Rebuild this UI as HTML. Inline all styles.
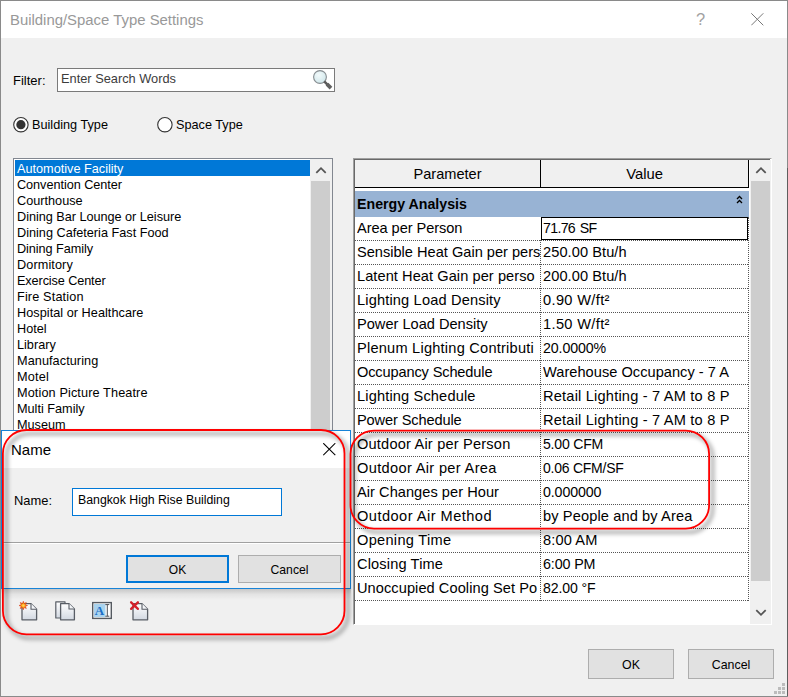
<!DOCTYPE html>
<html><head><meta charset="utf-8"><title>Building/Space Type Settings</title>
<style>
html,body{margin:0;padding:0;}
body{width:788px;height:697px;position:relative;overflow:hidden;background:#f0f0f0;font-family:"Liberation Sans",sans-serif;color:#000;}
.abs{position:absolute;}
.t{position:absolute;white-space:nowrap;line-height:16px;font-size:12px;}
#win{position:absolute;left:0;top:0;width:786px;height:695px;border:1px solid #8a8a8a;background:#f0f0f0;}
#titlebar{position:absolute;left:1px;top:1px;width:786px;height:37px;background:#fff;}
#title{left:10px;top:11px;font-size:14.9px;line-height:18px;color:#999;}
.li{position:absolute;left:17px;margin-top:1px;height:16px;line-height:16px;font-size:12.7px;white-space:nowrap;}
.btn{position:absolute;box-sizing:border-box;background:#e1e1e1;border:1px solid #adadad;text-align:center;font-size:12.4px;}
.row{position:absolute;left:355px;width:393px;height:24px;}
.p,.v{position:absolute;top:0;height:23px;line-height:23px;font-size:14.6px;white-space:nowrap;overflow:hidden;}
.p{left:2px;width:183px;}
.v{left:188px;width:204px;}
.hl{position:absolute;left:355px;width:393px;height:0;border-top:1px dotted #555;}
</style></head><body>
<div id="win"></div>
<div id="titlebar"></div>
<div class="abs" style="left:787px;top:168px;width:1px;height:528px;background:#5e5e5e;"></div>
<div class="t" id="title">Building/Space Type Settings</div>
<div class="t" style="left:696px;top:10px;font-size:16.5px;line-height:18px;color:#a2a2a2;">?</div>
<svg class="abs" style="left:751px;top:13px" width="13" height="13"><path d="M0.3 0.3 L12.3 12.3 M12.3 0.3 L0.3 12.3" stroke="#777" stroke-width="1" fill="none"/></svg>

<!-- filter -->
<div class="t" style="left:13px;top:73px;font-size:13px;">Filter:</div>
<div class="abs" style="left:57px;top:68px;width:276px;height:22px;border:1px solid #7a7a7a;background:#fff;"></div>
<div class="t" style="left:61px;top:71px;font-size:12.8px;color:#3c3c3c;">Enter Search Words</div>
<svg class="abs" style="left:311px;top:68px" width="24" height="24"><defs><radialGradient id="gl" cx="0.4" cy="0.35" r="0.7"><stop offset="0" stop-color="#f2fafb"/><stop offset="1" stop-color="#cfe6ea"/></radialGradient></defs><circle cx="9" cy="9" r="6.4" fill="url(#gl)" stroke="#868c90" stroke-width="1.1"/><path d="M13.2 13.4 L17 17.2" stroke="#5a5a5a" stroke-width="2.6"/><path d="M16 16.2 L20 20.2" stroke="#606060" stroke-width="3.8"/></svg>

<!-- radios -->
<svg class="abs" style="left:10px;top:114px" width="170" height="22"><circle cx="10.9" cy="10.7" r="7.2" fill="#fff" stroke="#333" stroke-width="1.1"/><circle cx="10.9" cy="10.7" r="4.6" fill="#333"/><circle cx="154.9" cy="10.7" r="7.2" fill="#fff" stroke="#333" stroke-width="1.1"/></svg>
<div class="t" style="left:32px;top:117px;font-size:12.7px;">Building Type</div>
<div class="t" style="left:176px;top:117px;font-size:12.7px;">Space Type</div>

<!-- listbox -->
<div class="abs" id="lb" style="left:13px;top:158px;width:318px;height:290px;border:1px solid #828790;background:#fff;"></div>
<div class="abs" style="left:15px;top:160px;width:295px;height:16px;background:#0078d7;"></div>
<div class="abs" style="left:310px;top:159px;width:22px;height:290px;background:#f0f0f0;"></div>
<div class="abs" style="left:311px;top:181px;width:19px;height:260px;background:#cdcdcd;"></div>
<svg class="abs" style="left:314px;top:166px" width="14" height="9"><path d="M2.3 6.8 L7 2.2 L11.7 6.8" stroke="#555" stroke-width="1.8" fill="none"/></svg>
<div id="list">
<div class="li" id="li0" style="top:160px;color:#fff;">Automotive Facility</div>
<div class="li" id="li1" style="top:176px;letter-spacing:-0.050px;">Convention Center</div>
<div class="li" id="li2" style="top:192px;">Courthouse</div>
<div class="li" id="li3" style="top:208px;letter-spacing:-0.030px;">Dining Bar Lounge or Leisure</div>
<div class="li" id="li4" style="top:224px;">Dining Cafeteria Fast Food</div>
<div class="li" id="li5" style="top:240px;letter-spacing:-0.067px;">Dining Family</div>
<div class="li" id="li6" style="top:256px;letter-spacing:0.100px;">Dormitory</div>
<div class="li" id="li7" style="top:272px;letter-spacing:-0.114px;">Exercise Center</div>
<div class="li" id="li8" style="top:288px;letter-spacing:0.145px;">Fire Station</div>
<div class="li" id="li9" style="top:304px;letter-spacing:0.038px;">Hospital or Healthcare</div>
<div class="li" id="li10" style="top:320px;">Hotel</div>
<div class="li" id="li11" style="top:336px;">Library</div>
<div class="li" id="li12" style="top:352px;letter-spacing:0.067px;">Manufacturing</div>
<div class="li" id="li13" style="top:368px;letter-spacing:0.200px;">Motel</div>
<div class="li" id="li14" style="top:384px;letter-spacing:0.114px;">Motion Picture Theatre</div>
<div class="li" id="li15" style="top:400px;">Multi Family</div>
<div class="li" id="li16" style="top:416px;">Museum</div>
</div>

<!-- table frame -->
<div class="abs" style="left:353px;top:158px;width:419px;height:467px;border:1px solid #a0a0a0;border-right-color:#fff;border-bottom-color:#fff;background:#fff;box-sizing:border-box;"></div>
<div class="abs" style="left:354px;top:159px;width:416px;height:1px;background:#696969;"></div>
<div class="abs" style="left:354px;top:159px;width:1px;height:465px;background:#696969;"></div>
<!-- header -->
<div class="abs" style="left:355px;top:160px;width:393px;height:27px;background:#f0f0f0;"></div>
<div class="abs" style="left:355px;top:187px;width:394px;height:1px;background:#000;"></div>
<div class="abs" style="left:540px;top:160px;width:1px;height:27px;background:#000;"></div>
<div class="abs" style="left:748px;top:160px;width:1px;height:28px;background:#000;"></div>
<div class="t" style="left:355px;top:164px;width:185px;text-align:center;font-size:14.6px;line-height:20px;">Parameter</div>
<div class="t" style="left:541px;top:164px;width:207px;text-align:center;font-size:14.8px;line-height:20px;">Value</div>
<!-- group row -->
<div class="abs" style="left:355px;top:191px;width:394px;height:26px;background:#98b3d4;"></div>
<div class="t" style="left:357px;top:194px;font-size:14.2px;line-height:20px;font-weight:bold;">Energy Analysis</div>
<svg class="abs" style="left:736px;top:195px" width="8" height="10"><path d="M1 4 L3.5 1.5 L6 4 M1 8 L3.5 5.5 L6 8" stroke="#000" stroke-width="1.3" fill="none"/></svg>
<div id="rows">
<div class="row" style="top:217px"><div class="p" id="p0" style="letter-spacing:-0.057px;">Area per Person</div><div class="v" id="v0" style="letter-spacing:-0.686px;font-size:14.2px;word-spacing:1.5px;">71.76 SF</div></div>
<div class="hl" style="top:240px"></div>
<div class="row" style="top:241px"><div class="p" id="p1" style="">Sensible Heat Gain per pers</div><div class="v" id="v1" style="letter-spacing:0.073px;">250.00 Btu/h</div></div>
<div class="hl" style="top:264px"></div>
<div class="row" style="top:265px"><div class="p" id="p2" style="letter-spacing:0.064px;">Latent Heat Gain per perso</div><div class="v" id="v2" style="letter-spacing:0.073px;">200.00 Btu/h</div></div>
<div class="hl" style="top:288px"></div>
<div class="row" style="top:289px"><div class="p" id="p3" style="letter-spacing:0.160px;">Lighting Load Density</div><div class="v" id="v3" style="letter-spacing:0.356px;">0.90 W/ft²</div></div>
<div class="hl" style="top:312px"></div>
<div class="row" style="top:313px"><div class="p" id="p4" style="">Power Load Density</div><div class="v" id="v4" style="letter-spacing:0.356px;">1.50 W/ft²</div></div>
<div class="hl" style="top:336px"></div>
<div class="row" style="top:337px"><div class="p" id="p5" style="letter-spacing:0.224px;">Plenum Lighting Contributi</div><div class="v" id="v5" style="letter-spacing:-0.114px;font-size:14.2px;">20.0000%</div></div>
<div class="hl" style="top:360px"></div>
<div class="row" style="top:361px"><div class="p" id="p6" style="letter-spacing:-0.141px;">Occupancy Schedule</div><div class="v" id="v6" style="letter-spacing:0.033px;">Warehouse Occupancy - 7 A</div></div>
<div class="hl" style="top:384px"></div>
<div class="row" style="top:385px"><div class="p" id="p7" style="letter-spacing:0.150px;">Lighting Schedule</div><div class="v" id="v7" style="letter-spacing:0.200px;">Retail Lighting - 7 AM to 8 P</div></div>
<div class="hl" style="top:408px"></div>
<div class="row" style="top:409px"><div class="p" id="p8" style="letter-spacing:-0.123px;">Power Schedule</div><div class="v" id="v8" style="letter-spacing:0.200px;">Retail Lighting - 7 AM to 8 P</div></div>
<div class="hl" style="top:432px"></div>
<div class="row" style="top:433px"><div class="p" id="p9" style="letter-spacing:0.190px;">Outdoor Air per Person</div><div class="v" id="v9" style="letter-spacing:-0.229px;font-size:14.1px;">5.00 CFM</div></div>
<div class="hl" style="top:456px"></div>
<div class="row" style="top:457px"><div class="p" id="p10" style="letter-spacing:0.337px;">Outdoor Air per Area</div><div class="v" id="v10" style="letter-spacing:-0.240px;font-size:14px;">0.06 CFM/SF</div></div>
<div class="hl" style="top:480px"></div>
<div class="row" style="top:481px"><div class="p" id="p11" style="letter-spacing:0.042px;">Air Changes per Hour</div><div class="v" id="v11" style="letter-spacing:-0.114px;font-size:14.2px;">0.000000</div></div>
<div class="hl" style="top:504px"></div>
<div class="row" style="top:505px"><div class="p" id="p12" style="letter-spacing:0.471px;">Outdoor Air Method</div><div class="v" id="v12" style="letter-spacing:0.120px;">by People and by Area</div></div>
<div class="hl" style="top:528px"></div>
<div class="row" style="top:529px"><div class="p" id="p13" style="letter-spacing:0.291px;">Opening Time</div><div class="v" id="v13" style="letter-spacing:0.133px;">8:00 AM</div></div>
<div class="hl" style="top:552px"></div>
<div class="row" style="top:553px"><div class="p" id="p14" style="letter-spacing:0.145px;">Closing Time</div><div class="v" id="v14" style="letter-spacing:-0.133px;font-size:14.3px;">6:00 PM</div></div>
<div class="hl" style="top:576px"></div>
<div class="row" style="top:577px"><div class="p" id="p15" style="letter-spacing:0.067px;">Unoccupied Cooling Set Po</div><div class="v" id="v15" style="letter-spacing:-0.114px;font-size:14.1px;">82.00 °F</div></div>
<div class="hl" style="top:600px"></div>
</div>
<!-- selected cell -->
<div class="abs" style="left:541px;top:217px;width:205px;height:21px;border:1px solid #000;"></div>
<!-- dotted column lines -->
<div class="abs" style="left:540px;top:240px;width:0;height:361px;border-left:1px dotted #555;"></div>
<div class="abs" style="left:748px;top:217px;width:0;height:384px;border-left:1px dotted #555;"></div>
<!-- table scrollbar -->
<div class="abs" style="left:750px;top:160px;width:21px;height:464px;background:#f0f0f0;"></div>
<div class="abs" style="left:751px;top:181px;width:19px;height:400px;background:#cdcdcd;"></div>
<svg class="abs" style="left:754px;top:166px" width="14" height="9"><path d="M2.3 6.8 L7 2.2 L11.7 6.8" stroke="#555" stroke-width="1.8" fill="none"/></svg>
<svg class="abs" style="left:754px;top:608px" width="14" height="9"><path d="M2.3 2.2 L7 6.8 L11.7 2.2" stroke="#555" stroke-width="1.8" fill="none"/></svg>

<!-- main buttons -->
<div class="btn" style="left:588px;top:649px;width:86px;height:30px;line-height:30px;">OK</div>
<div class="btn" style="left:688px;top:649px;width:86px;height:30px;line-height:30px;">Cancel</div>

<svg class="abs" style="left:772px;top:681px" width="15" height="15"><rect x="10" y="2" width="3" height="3" fill="#bcbcbc"/><rect x="6" y="6" width="3" height="3" fill="#bcbcbc"/><rect x="10" y="6" width="3" height="3" fill="#bcbcbc"/><rect x="2" y="10" width="3" height="3" fill="#bcbcbc"/><rect x="6" y="10" width="3" height="3" fill="#bcbcbc"/><rect x="10" y="10" width="3" height="3" fill="#bcbcbc"/></svg>
<!-- toolbar icons -->
<svg class="abs" style="left:14px;top:596px" width="140" height="30" viewBox="14 596 140 30">
<defs>
<linearGradient id="pg" x1="0" y1="0" x2="0" y2="1"><stop offset="0" stop-color="#ffffff"/><stop offset="1" stop-color="#d3d9e2"/></linearGradient>
<radialGradient id="st" cx="0.5" cy="0.5" r="0.5"><stop offset="0" stop-color="#ffe060"/><stop offset="0.45" stop-color="#ffa018"/><stop offset="1" stop-color="#e03808"/></radialGradient>
</defs>
<!-- new -->
<path d="M22 603.6 H31 L36.6 609.2 V619.8 H22 Z" fill="url(#pg)" stroke="#595e66" stroke-width="1.3" stroke-linejoin="round"/>
<path d="M31 603.6 V609.2 H36.6" fill="#f4f6f9" stroke="#595e66" stroke-width="1.1" stroke-linejoin="round"/>
<path d="M23.3 600.4 L24.3 603 L26.8 601.8 L25.7 604.3 L28.2 605.3 L25.7 606.3 L26.8 608.8 L24.3 607.6 L23.3 610.2 L22.3 607.6 L19.8 608.8 L20.9 606.3 L18.4 605.3 L20.9 604.3 L19.8 601.8 L22.3 603 Z" fill="url(#st)" stroke="#d6300a" stroke-width="0.6" transform="translate(23.3 605.5) scale(0.86) translate(-23.3 -605.3)"/>
<!-- copy -->
<path d="M55.8 601.8 H65 V618 H55.8 Z" fill="url(#pg)" stroke="#595e66" stroke-width="1.2" stroke-linejoin="round"/>
<path d="M60.6 603.6 H69 L74.4 609 V619.8 H60.6 Z" fill="url(#pg)" stroke="#595e66" stroke-width="1.3" stroke-linejoin="round"/>
<path d="M69 603.6 V609 H74.4" fill="#f4f6f9" stroke="#595e66" stroke-width="1.1" stroke-linejoin="round"/>
<!-- rename -->
<rect x="92.7" y="602.6" width="18.6" height="15.8" fill="#fff" stroke="#555a61" stroke-width="1.4"/>
<rect x="94" y="604" width="11.5" height="13" fill="#a9d3ee"/>
<text x="99.4" y="615.2" font-family="Liberation Serif, serif" font-weight="bold" font-size="13" fill="#1b6ec6" text-anchor="middle">A</text>
<path d="M105.3 604.6 H109.3 M107.3 604.6 V616.2 M105.3 616.2 H109.3" stroke="#4a4f57" stroke-width="1" fill="none"/>
<!-- delete -->
<path d="M133 603.6 H142 L147.6 609.2 V619.8 H133 Z" fill="url(#pg)" stroke="#595e66" stroke-width="1.3" stroke-linejoin="round"/>
<path d="M142 603.6 V609.2 H147.6" fill="#f4f6f9" stroke="#595e66" stroke-width="1.1" stroke-linejoin="round"/>
<path d="M131.1 602.3 L137.9 608.9 M137.9 602.3 L131.1 608.9" stroke="#d4202a" stroke-width="2.3" stroke-linecap="round" fill="none"/>
</svg>

<!-- Name dialog -->
<div class="abs" style="left:1px;top:430px;width:348px;height:157px;border:1px solid #1883d7;background:#f0f0f0;"></div>
<div class="abs" style="left:2px;top:431px;width:348px;height:37px;background:#fff;"></div>
<div class="t" style="left:11px;top:441px;font-size:15px;line-height:18px;">Name</div>
<svg class="abs" style="left:323px;top:443px" width="13" height="13"><path d="M0.3 0.2 L12.3 12.2 M12.3 0.2 L0.3 12.2" stroke="#000" stroke-width="1.05" fill="none"/></svg>
<div class="t" style="left:14px;top:493px;font-size:12.9px;">Name:</div>
<div class="abs" style="left:72px;top:488px;width:208px;height:26px;border:1px solid #0078d7;background:#fff;"></div>
<div class="t" style="left:78px;top:492px;font-size:12.3px;">Bangkok High Rise Building</div>
<div class="abs" style="left:2px;top:542px;width:348px;height:1px;background:#a0a0a0;"></div>
<div class="abs" style="left:2px;top:543px;width:348px;height:1px;background:#fff;"></div>
<div class="btn" style="left:126px;top:555px;width:103px;height:28px;line-height:27px;font-size:12px;border:2px solid #0078d7;">OK</div>
<div class="btn" style="left:238px;top:555px;width:103px;height:28px;line-height:29px;font-size:12.2px;">Cancel</div>

<div class="abs" style="left:1px;top:589px;width:350px;height:11px;background:linear-gradient(rgba(0,0,0,0.17),rgba(0,0,0,0.05) 50%,rgba(0,0,0,0));"></div>
<!-- red annotations -->
<svg class="abs" style="left:0;top:0;pointer-events:none" width="788" height="697">
<defs><filter id="sh" x="-5%" y="-5%" width="110%" height="115%"><feGaussianBlur stdDeviation="2.2"/></filter></defs>
<g fill="none">
<rect x="6.4" y="433.6" width="341.6" height="204.4" rx="23.5" stroke="#000" stroke-opacity="0.36" stroke-width="3.2" filter="url(#sh)"/>
<rect x="2.9" y="430" width="341.6" height="204.3" rx="23.5" stroke="#f00" stroke-width="1.8"/>
<rect x="354" y="434.2" width="358.6" height="98" rx="23.5" stroke="#000" stroke-opacity="0.36" stroke-width="3.2" filter="url(#sh)"/>
<rect x="350.5" y="430.6" width="358.6" height="98" rx="23.5" stroke="#f00" stroke-width="1.8"/>
</g></svg>

</body></html>
